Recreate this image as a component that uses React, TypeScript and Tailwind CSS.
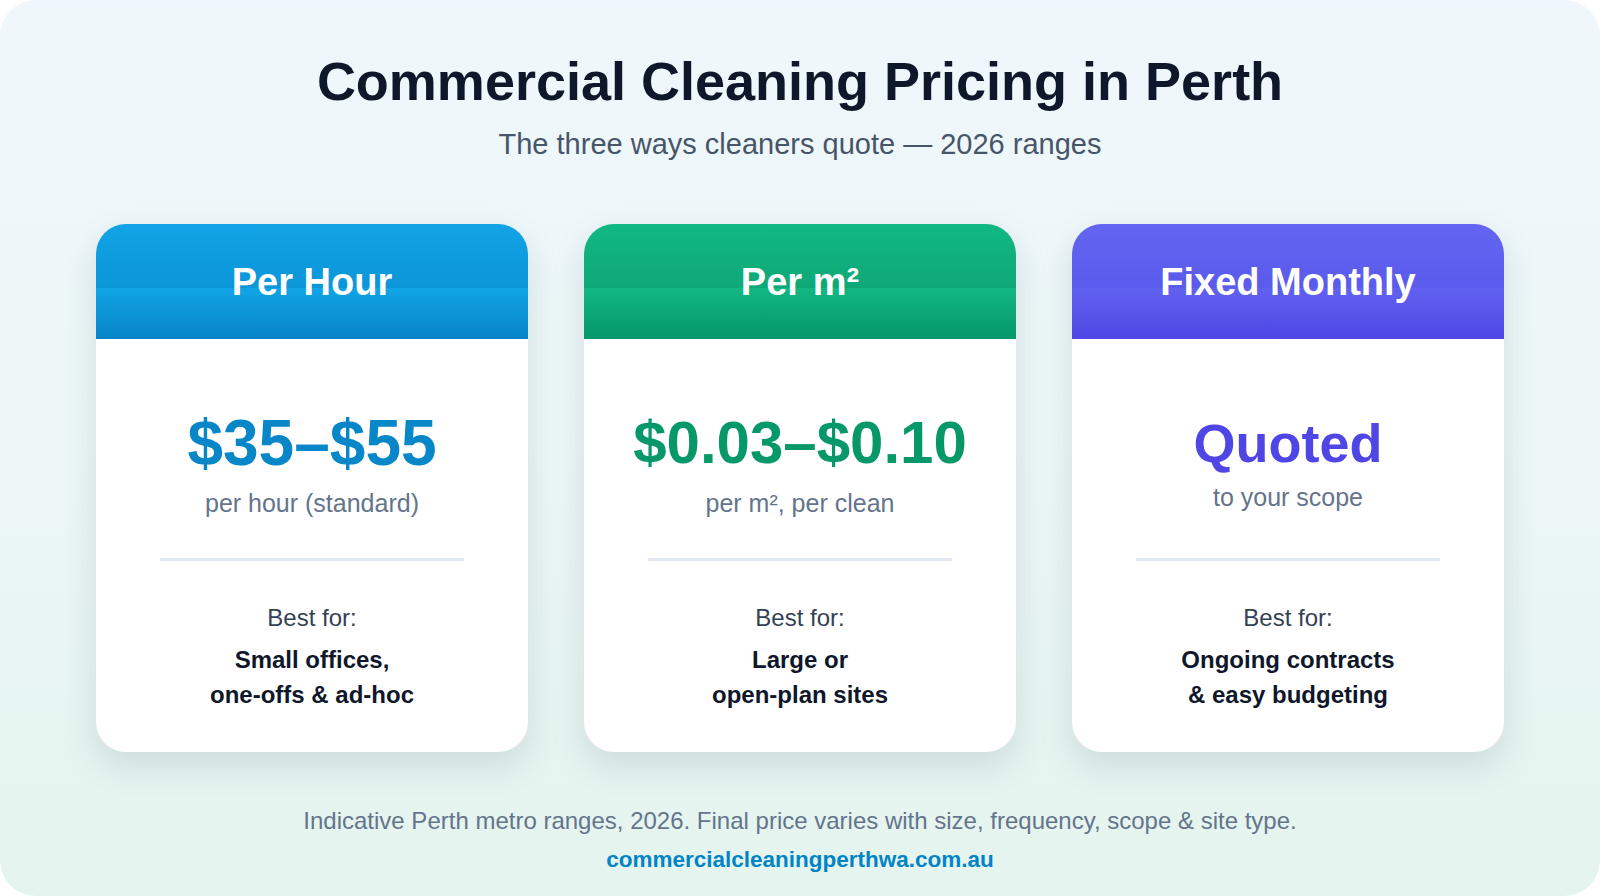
import React from 'react';

type Plan = {
  name: string;
  header: string;
  price: string;
  priceClass: string;
  sub: string;
  subGap: string;
  best: [string, string];
};

const PLANS: Plan[] = [
  {
    name: 'Per Hour',
    header: 'bg-[linear-gradient(180deg,#12a3e6_0%,#0b96d8_56%,#10a4e6_56%,#0784c6_100%)]',
    price: '$35–$55',
    priceClass: 'text-[64px] text-[#0786c8]',
    sub: 'per hour (standard)',
    subGap: 'mt-[13px]',
    best: ['Small offices,', 'one-offs & ad-hoc'],
  },
  {
    name: 'Per m²',
    header: 'bg-[linear-gradient(180deg,#11b882_0%,#0ea877_56%,#12b784_56%,#059669_100%)]',
    price: '$0.03–$0.10',
    priceClass: 'text-[60px] text-[#07986a]',
    sub: 'per m², per clean',
    subGap: 'mt-[13px]',
    best: ['Large or', 'open-plan sites'],
  },
  {
    name: 'Fixed Monthly',
    header: 'bg-[linear-gradient(180deg,#6366f1_0%,#5a5aec_56%,#6062f0_56%,#4f46e5_100%)]',
    price: 'Quoted',
    priceClass: 'text-[54px] text-[#4f46e5]',
    sub: 'to your scope',
    subGap: 'mt-[7px]',
    best: ['Ongoing contracts', '& easy budgeting'],
  },
];

const PriceCard: React.FC<{ plan: Plan }> = ({ plan }) => (
  <div className="w-[432px] h-[528px] rounded-[30px] bg-white overflow-hidden shadow-[0_14px_34px_rgba(30,60,80,0.13)] flex flex-col">
    {/* Header */}
    <div className={`h-[115px] shrink-0 flex items-center justify-center ${plan.header}`}>
      <span className="text-[38px] leading-[38px] font-bold text-white">{plan.name}</span>
    </div>

    {/* Body */}
    <div className="flex flex-col items-center">
      <div className="h-[219px] pt-[72px] flex flex-col items-center">
        <div className={`leading-[64px] font-bold ${plan.priceClass}`}>{plan.price}</div>
        <div className={`${plan.subGap} text-[25px] leading-[30px] text-[#64748b]`}>{plan.sub}</div>
      </div>
      <div className="w-[304px] h-[3px] bg-[#e2e8f0]" />
      <div className="mt-[42px] text-[24px] leading-[30px] text-[#334155]">Best for:</div>
      <div className="mt-[9px] text-[24px] leading-[35px] font-bold text-[#0f172a] text-center">
        {plan.best[0]}
        <br />
        {plan.best[1]}
      </div>
    </div>
  </div>
);

export default function App() {
  return (
    <div className="w-[1600px] h-[896px] bg-white font-['Liberation_Sans',Arial,sans-serif]">
      <div className="w-full h-full rounded-[36px] bg-[linear-gradient(180deg,#eff7fc_0%,#ecf6f6_50%,#e4f4ee_100%)] flex flex-col items-center">
        <h1 className="mt-[54px] text-[54px] leading-[54px] font-bold text-[#0f172a]">
          Commercial Cleaning Pricing in Perth
        </h1>
        <p className="mt-[22px] text-[29px] leading-[28px] text-[#475569]">
          The three ways cleaners quote — 2026 ranges
        </p>

        <div className="mt-[66px] flex gap-[56px]">
          {PLANS.map((p) => (
            <PriceCard key={p.name} plan={p} />
          ))}
        </div>

        <p className="mt-[57px] text-[24px] leading-[24px] text-[#64748b]">
          Indicative Perth metro ranges, 2026. Final price varies with size, frequency, scope &amp; site type.
        </p>
        <p className="mt-[16px] text-[22.5px] leading-[22px] font-bold text-[#0284c7]">
          commercialcleaningperthwa.com.au
        </p>
      </div>
    </div>
  );
}
